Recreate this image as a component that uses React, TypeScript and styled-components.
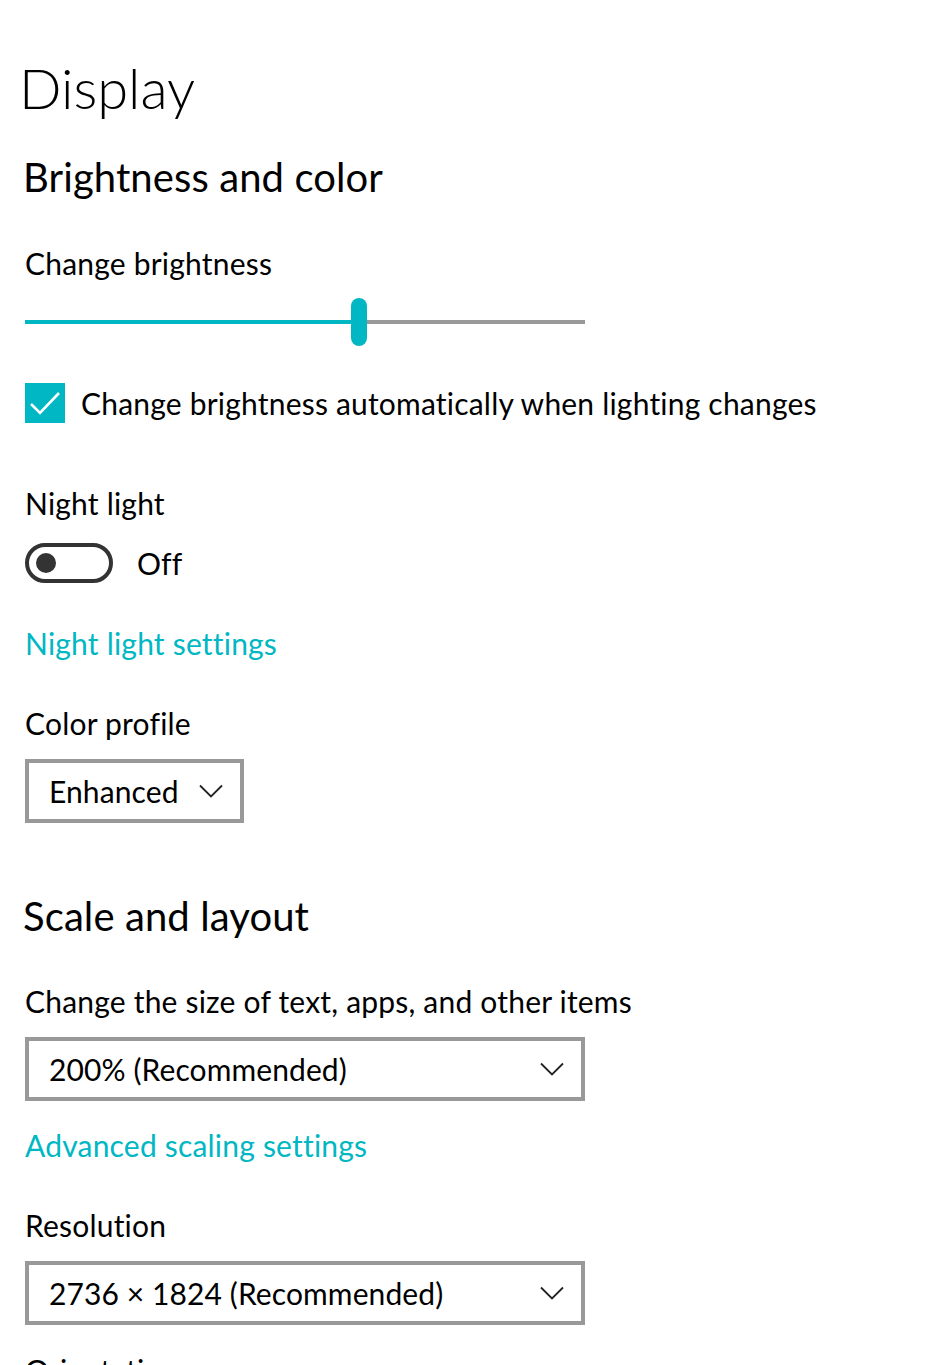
import React from 'react';
import styled, { createGlobalStyle } from 'styled-components';

const accent = '#00b7c3';
const bodyFont = `Lato, "Noto Sans", sans-serif`;

const GlobalStyle = createGlobalStyle`
  html, body {
    margin: 0;
    background: #fff;
  }
  body {
    font-family: ${bodyFont};
    color: #000;
    height: 1365px;
    overflow: hidden;
  }
`;

const Page = styled.main`
  display: flex;
  flex-direction: column;
  align-items: flex-start;
  padding-left: 25px;
  box-sizing: border-box;

  & > * {
    flex-shrink: 0;
  }
`;

const PageTitle = styled.h1`
  margin: 56px 0 0 -6px;
  font-size: 56px;
  font-weight: 300;
  line-height: 64px;
`;

const SectionTitle = styled.h2<{ $top: number }>`
  margin: ${(p) => p.$top}px 0 0 -2px;
  font-size: 40px;
  font-weight: 400;
  line-height: 48px;
  letter-spacing: 0.1px;
`;

const Label = styled.div<{ $top: number }>`
  margin-top: ${(p) => p.$top}px;
  font-size: 30px;
  line-height: 40px;
  letter-spacing: 0.2px;
`;

const Link = styled.a<{ $top: number }>`
  margin-top: ${(p) => p.$top}px;
  font-size: 30px;
  line-height: 40px;
  letter-spacing: 0.2px;
  color: ${accent};
  text-decoration: none;
  cursor: pointer;
`;

/* slider */
const SliderTrack = styled.div`
  margin-top: 15px;
  width: 560px;
  height: 48px;
  display: flex;
  align-items: center;
`;

const TrackFill = styled.div`
  height: 4px;
  background: ${accent};
`;

const TrackRest = styled.div`
  flex: 1;
  height: 4px;
  background: #999;
`;

const Thumb = styled.div`
  width: 16px;
  height: 48px;
  border-radius: 8px;
  background: ${accent};
  flex-shrink: 0;
`;

/* checkbox */
const CheckRow = styled.label`
  margin-top: 37px;
  display: flex;
  align-items: center;
  gap: 16px;
  font-size: 30px;
  line-height: 40px;
  letter-spacing: 0.2px;
`;

const CheckBox = styled.span`
  width: 40px;
  height: 40px;
  background: ${accent};
  display: flex;
  align-items: center;
  justify-content: center;
`;

/* toggle */
const ToggleRow = styled.div`
  margin-top: 20px;
  display: flex;
  align-items: center;
  gap: 24px;
  font-size: 30px;
  line-height: 40px;
  letter-spacing: 0.2px;
`;

const Toggle = styled.span<{ $on: boolean }>`
  width: 88px;
  height: 40px;
  box-sizing: border-box;
  border: 4px solid #333;
  border-radius: 20px;
  display: flex;
  align-items: center;
  justify-content: ${(p) => (p.$on ? 'flex-end' : 'flex-start')};
  padding: 0 7px;
`;

const Knob = styled.span`
  width: 20px;
  height: 20px;
  border-radius: 50%;
  background: #333;
`;

/* dropdown */
const Dropdown = styled.div<{ $top: number; $width?: number }>`
  margin-top: ${(p) => p.$top}px;
  box-sizing: border-box;
  width: ${(p) => (p.$width ? `${p.$width}px` : 'auto')};
  height: 64px;
  border: 4px solid #999;
  display: flex;
  align-items: center;
  justify-content: space-between;
  gap: 20px;
  padding: 0 17px 0 20px;
  font-size: 30px;
  letter-spacing: 0.1px;
  background: #fff;
`;

const Chevron = () => (
  <svg width="24" height="14" viewBox="0 0 24 14" fill="none">
    <path d="M1 1.5 L12 12.5 L23 1.5" stroke="#222" strokeWidth="1.8" />
  </svg>
);

const Check = () => (
  <svg width="40" height="40" viewBox="0 0 40 40" fill="none">
    <path d="M6 21 L15 30 L34 10" stroke="#fff" strokeWidth="2.6" />
  </svg>
);

export default function App() {
  const brightness = 58.2;
  return (
    <>
      <GlobalStyle />
      <Page>
        <PageTitle>Display</PageTitle>
        <SectionTitle $top={33}>Brightness and color</SectionTitle>
        <Label $top={42}>Change brightness</Label>
        <SliderTrack>
          <TrackFill style={{ width: `${brightness}%` }} />
          <Thumb />
          <TrackRest />
        </SliderTrack>
        <CheckRow>
          <CheckBox>
            <Check />
          </CheckBox>
          Change brightness automatically when lighting changes
        </CheckRow>
        <Label $top={60}>Night light</Label>
        <ToggleRow>
          <Toggle $on={false}>
            <Knob />
          </Toggle>
          Off
        </ToggleRow>
        <Link $top={40}>Night light settings</Link>
        <Label $top={40}>Color profile</Label>
        <Dropdown $top={16}>
          Enhanced
          <Chevron />
        </Dropdown>
        <SectionTitle $top={69}>Scale and layout</SectionTitle>
        <Label $top={41}>Change the size of text, apps, and other items</Label>
        <Dropdown $top={16} $width={560}>
          200% (Recommended)
          <Chevron />
        </Dropdown>
        <Link $top={24}>Advanced scaling settings</Link>
        <Label $top={40}>Resolution</Label>
        <Dropdown $top={16} $width={560}>
          2736 × 1824 (Recommended)
          <Chevron />
        </Dropdown>
        <Label $top={25}>Orientation</Label>
      </Page>
    </>
  );
}
